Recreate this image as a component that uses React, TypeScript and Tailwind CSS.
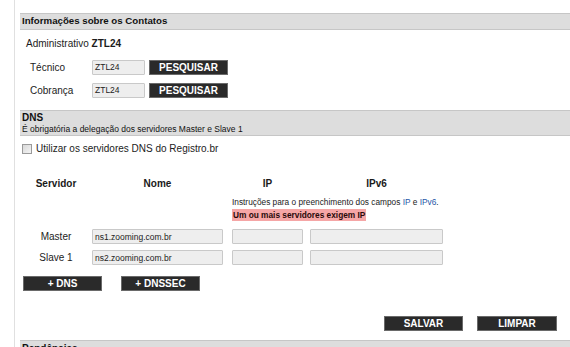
import React from "react";

const Btn = ({ children, className = "" }: { children: React.ReactNode; className?: string }) => (
  <div
    className={`h-[15px] w-[79px] shrink-0 bg-[#2a2a2a] border border-[#6a6a6a] flex items-center justify-center text-white font-bold text-[10px] leading-none ${className}`}
  >
    {children}
  </div>
);

const Input = ({ value = "", className = "" }: { value?: string; className?: string }) => (
  <div
    className={`h-[15px] shrink-0 bg-[#eeeeee] border border-[#c9c9c9] rounded-[1px] flex items-center pl-[2px] text-[8.5px] leading-none text-[#222] ${className}`}
  >
    {value}
  </div>
);

export default function App() {
  return (
    <div className="w-[570px] h-[347px] overflow-hidden bg-white flex font-['Liberation_Sans',Arial,sans-serif] text-[#1c1c1c]">
      <div className="w-[14px] shrink-0" />
      <div className="w-px shrink-0 bg-[#e0e0e0]" />
      <div className="flex-1 pl-[5px] pt-[13px] flex flex-col">
        {/* Contatos header */}
        <div className="h-[17px] shrink-0 border-y border-[#c6c6c6] bg-[#dddddd] pl-[2px] flex items-center text-[9.7px] font-bold text-[#111]">
          Informações sobre os Contatos
        </div>
        <div className="mt-[6px] h-[14px] pl-[6px] flex items-center text-[10px]">
          Administrativo&nbsp;<span className="font-bold">ZTL24</span>
        </div>
        <div className="mt-[10px] h-[15px] pl-[10px] flex items-center">
          <div className="w-[62px] text-[10px]">Técnico</div>
          <Input value="ZTL24" className="w-[53px]" />
          <Btn className="ml-[4px]">PESQUISAR</Btn>
        </div>
        <div className="mt-[8px] h-[15px] pl-[10px] flex items-center">
          <div className="w-[62px] text-[10px]">Cobrança</div>
          <Input value="ZTL24" className="w-[53px]" />
          <Btn className="ml-[4px]">PESQUISAR</Btn>
        </div>

        {/* DNS header */}
        <div className="mt-[12px] h-[26px] shrink-0 border-y border-[#c6c6c6] bg-[#dddddd] pl-[2px] flex flex-col justify-center text-[#111]">
          <div className="text-[10px] font-bold leading-[12px]">DNS</div>
          <div className="text-[8.5px] leading-[10px]">É obrigatória a delegação dos servidores Master e Slave 1</div>
        </div>
        <div className="mt-[7px] h-[11px] pl-[2px] flex items-center">
          <div className="w-[10px] h-[10px] border border-[#9a9a9a] bg-gradient-to-br from-[#d8d8d8] to-[#f4f4f4]" />
          <div className="ml-[4px] text-[10px] text-[#222]">Utilizar os servidores DNS do Registro.br</div>
        </div>

        {/* table headers */}
        <div className="mt-[22px] h-[14px] flex items-center text-[10px] font-bold text-[#1a1a1a]">
          <div className="w-[72px] text-center">Servidor</div>
          <div className="w-[131px] text-center">Nome</div>
          <div className="ml-[9px] w-[71px] text-center">IP</div>
          <div className="ml-[7px] w-[133px] text-center">IPv6</div>
        </div>
        <div className="mt-[7px] ml-[212px] h-[11px] flex items-center text-[8.3px] text-[#222]">
          Instruções para o preenchimento dos campos&nbsp;<span className="text-[#2456a8]">IP</span>&nbsp;e&nbsp;
          <span className="text-[#2456a8]">IPv6</span>.
        </div>
        <div className="mt-[1px] ml-[212px] self-start h-[13px] px-[1px] bg-[#f5a6a6] flex items-center text-[8.3px] font-bold text-[#2a0a0a]">
          Um ou mais servidores exigem IP
        </div>

        {/* rows */}
        <div className="mt-[8px] h-[15px] flex items-center">
          <div className="w-[72px] text-center text-[10px]">Master</div>
          <Input value="ns1.zooming.com.br" className="w-[131px]" />
          <Input className="ml-[9px] w-[71px]" />
          <Input className="ml-[7px] w-[133px]" />
        </div>
        <div className="mt-[6px] h-[15px] flex items-center">
          <div className="w-[72px] text-center text-[10px]">Slave 1</div>
          <Input value="ns2.zooming.com.br" className="w-[131px]" />
          <Input className="ml-[9px] w-[71px]" />
          <Input className="ml-[7px] w-[133px]" />
        </div>

        <div className="mt-[11px] flex">
          <Btn className="ml-[3px]">+ DNS</Btn>
          <Btn className="ml-[19px]">+ DNSSEC</Btn>
        </div>

        <div className="mt-[25px] flex">
          <Btn className="ml-[364px]">SALVAR</Btn>
          <Btn className="ml-[14px] w-[80px]">LIMPAR</Btn>
        </div>

        <div className="mt-[9px] h-[17px] shrink-0 border-t border-[#c6c6c6] bg-[#dddddd] pl-[2px] pt-[2px] text-[10px] font-bold text-[#111] leading-[12px]">
          Pendências
        </div>
      </div>
    </div>
  );
}
